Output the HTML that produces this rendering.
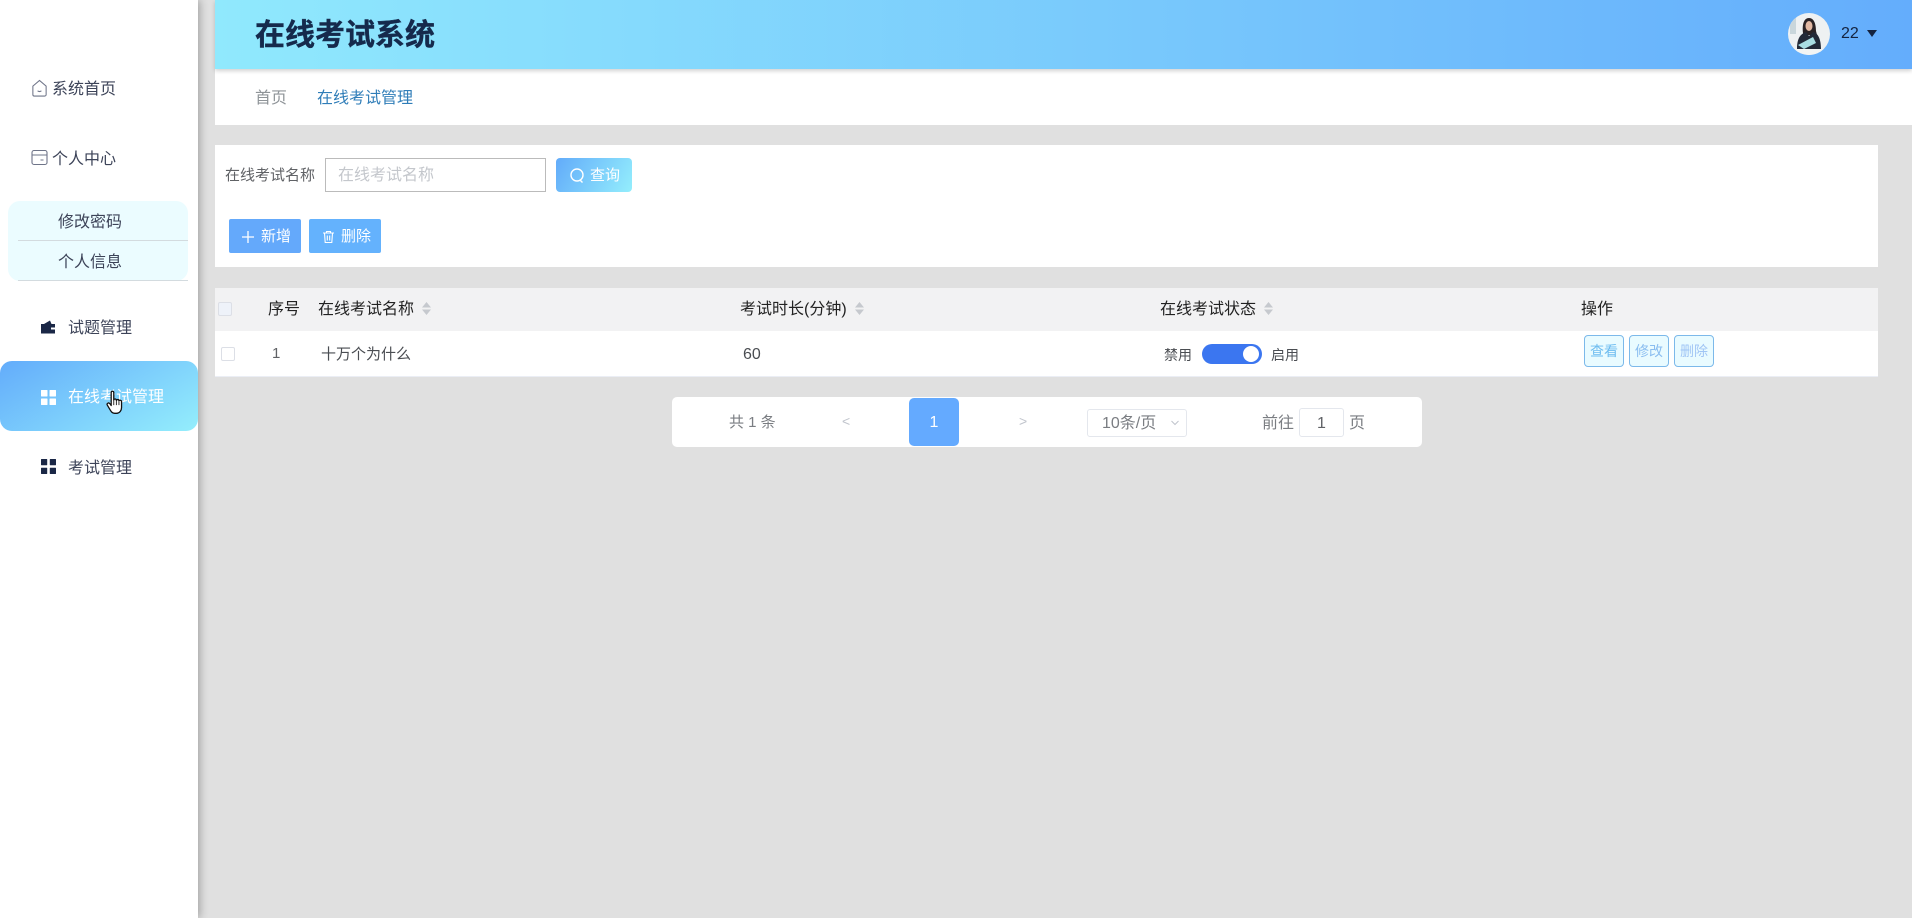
<!DOCTYPE html>
<html lang="zh"><head><meta charset="utf-8"><title>在线考试系统</title>
<style>
*{box-sizing:border-box;margin:0;padding:0}
html,body{width:1912px;height:918px;overflow:hidden;background:#e0e0e0;font-family:"Liberation Sans","Noto Sans CJK SC",sans-serif;font-weight:400}
.a{position:absolute;white-space:nowrap}
.t{position:absolute;white-space:nowrap;line-height:24px;height:24px}
.sb{left:0;top:0;width:198px;height:918px;background:#fff;box-shadow:2px 0 8px rgba(0,0,0,.28)}
.hd{left:215px;top:0;width:1697px;height:69px;background:linear-gradient(90deg,#90e9fd 0%,#64adfc 100%);box-shadow:0 2px 4px rgba(0,0,0,.18)}
.btn{position:absolute;top:219px;height:34px;border-radius:2px;color:#fff;font-size:15px;line-height:33px}
.op{position:absolute;top:335px;width:40px;height:32px;background:#e9fbff;border:1px solid #7cb9ea;border-radius:4px;font-size:14px;line-height:30px;text-align:center}
.sort{position:absolute;width:11px;height:15px}
.chk{position:absolute;width:14px;height:14px;border:1px solid #dcdfe6;border-radius:2px}
</style></head><body>

<div class="a sb"></div>
<div class="a" style="left:215px;top:69px;width:1697px;height:56px;background:#fff"></div>
<div class="a hd"></div>
<div class="t" style="left:255px;top:15px;font-size:30px;font-weight:700;color:#152a4c;line-height:42px;height:42px;-webkit-text-stroke:.4px #152a4c">在线考试系统</div>
<svg class="a" style="left:1788px;top:13px" width="42" height="42" viewBox="0 0 42 42"><defs><clipPath id="c"><circle cx="21" cy="21" r="21"/></clipPath></defs><g clip-path="url(#c)"><rect width="42" height="42" fill="#eef1f2"/><rect x="2" y="5" width="6" height="16" fill="#c9d6db"/><path d="M15 20c-1-9 1-15 6-15s7 6 7 13l1 4H15z" fill="#2a2326"/><ellipse cx="21" cy="13" rx="3.500" ry="5" fill="#e2b9a4"/><path d="M9 36c0-10 3-15 9-17l3 4 4-4c5 1 8 7 8 17z" fill="#232a38"/><path d="M10 32l15-8 3 6-12 6z" fill="#a9dde2"/><rect x="6" y="36" width="30" height="6" fill="#f3f5f4"/></g></svg>
<div class="t" style="left:1841px;top:22px;font-size:16px;color:#14233f">22</div>
<div class="a" style="left:1867px;top:30px;width:0;height:0;border-left:5px solid transparent;border-right:5px solid transparent;border-top:7px solid #14233f"></div>

<div class="t" style="left:255px;top:87px;font-size:16px;color:#8f9498">首页</div>
<div class="t" style="left:317px;top:87px;font-size:16px;color:#2f7db8">在线考试管理</div>

<!-- sidebar -->
<svg class="a" style="left:31px;top:79px" width="17" height="18" viewBox="0 0 17 19" fill="none" stroke="#6e7488" stroke-width="1.100"><path d="M1.500 7.500L8.500 1.500l7 6v9a1.500 1.500 0 0 1-1.500 1.500H3a1.500 1.500 0 0 1-1.500-1.500z"/><path d="M6.500 12.500q2 1.500 4 0"/></svg>
<div class="t" style="left:52px;top:78px;font-size:16px;color:#3c4358">系统首页</div>
<svg class="a" style="left:31px;top:149px" width="17" height="17" viewBox="0 0 17 17" fill="none" stroke="#6e7488" stroke-width="1.100"><rect x="1" y="1.500" width="15" height="14" rx="2"/><path d="M1 6h15M9.500 11h3"/></svg>
<div class="t" style="left:52px;top:148px;font-size:16px;color:#3c4358">个人中心</div>

<div class="a" style="left:8px;top:201px;width:180px;height:80px;background:#ebfcff;border-radius:12px"></div>
<div class="a" style="left:18px;top:240px;width:170px;height:1px;background:#d3dbdf"></div>
<div class="a" style="left:18px;top:280px;width:170px;height:1px;background:#d3dbdf"></div>
<div class="t" style="left:58px;top:211px;font-size:16px;color:#3c4358">修改密码</div>
<div class="t" style="left:58px;top:251px;font-size:16px;color:#3c4358">个人信息</div>

<svg class="a" style="left:41px;top:320px" width="14" height="14" viewBox="0 0 14 14"><path d="M0 4h14v9.500H0z" fill="#1a2746"/><path d="M3 4l6-3.500 1.500 3.500z" fill="#1a2746"/><rect x="10" y="7.500" width="4" height="2" fill="#fff"/></svg>
<div class="t" style="left:68px;top:317px;font-size:16px;color:#3c4358">试题管理</div>

<div class="a" style="left:0;top:361px;width:198px;height:70px;border-radius:12px;background:linear-gradient(150deg,#63acfb 0%,#94eefc 100%)"></div>
<svg class="a" style="left:41px;top:390px" width="15" height="15" viewBox="0 0 15 15" fill="#fff"><rect width="6.500" height="6.500" rx=".5"/><rect x="8.500" width="6.500" height="6.500" rx=".5"/><rect y="8.500" width="6.500" height="6.500" rx=".5"/><rect x="8.500" y="8.500" width="6.500" height="6.500" rx=".5"/></svg>
<div class="t" style="left:68px;top:386px;font-size:16px;color:#fff">在线考试管理</div>

<svg class="a" style="left:41px;top:459px" width="15" height="15" viewBox="0 0 15 15" fill="#1a2746"><rect width="6.200" height="6.200" rx=".5"/><rect x="8.800" width="6.200" height="6.200" rx=".5"/><rect y="8.800" width="6.200" height="6.200" rx=".5"/><rect x="8.800" y="8.800" width="6.200" height="6.200" rx=".5"/></svg>
<div class="t" style="left:68px;top:457px;font-size:16px;color:#3c4358">考试管理</div>

<!-- search card -->
<div class="a" style="left:215px;top:145px;width:1663px;height:122px;background:#fff"></div>
<div class="t" style="left:225px;top:164px;font-size:15px;color:#606266">在线考试名称</div>
<div class="a" style="left:325px;top:158px;width:221px;height:34px;border:1px solid #bbb;background:#fff"></div>
<div class="t" style="left:338px;top:164px;font-size:16px;color:#c4c7cc">在线考试名称</div>
<div class="a" style="left:556px;top:158px;width:76px;height:34px;border-radius:4px;background:linear-gradient(120deg,#62abfa,#94eefc)"></div>
<svg class="a" style="left:569px;top:167px" width="16" height="17" viewBox="0 0 16 17" fill="none" stroke="#fff" stroke-width="1.400"><circle cx="8" cy="8" r="6"/><path d="M11 13l2.500 2.500"/></svg>
<div class="t" style="left:590px;top:164px;font-size:15px;color:#fff">查询</div>

<div class="btn" style="left:229px;width:72px;background:#64a9fb"></div>
<svg class="a" style="left:241px;top:230px" width="14" height="14" viewBox="0 0 14 14" stroke="#fff" stroke-width="1.300"><path d="M7 1v12M1 7h12"/></svg>
<div class="t" style="left:261px;top:225px;font-size:15px;color:#fff">新增</div>
<div class="btn" style="left:309px;width:72px;background:#64b2fd"></div>
<svg class="a" style="left:322px;top:230px" width="13" height="14" viewBox="0 0 13 14" fill="none" stroke="#fff" stroke-width="1.100"><path d="M1 3h11M4.500 3V1.500h4V3M2.500 3l.7 9.500h6.600l.7-9.500M5.300 5.500v5M7.700 5.500v5"/></svg>
<div class="t" style="left:341px;top:225px;font-size:15px;color:#fff">删除</div>

<!-- table -->
<div class="a" style="left:215px;top:288px;width:1663px;height:43px;background:#f2f2f3"></div>
<div class="a" style="left:215px;top:331px;width:1663px;height:46px;background:#fff;border-bottom:1px solid #ebeef5"></div>
<div class="chk" style="left:218px;top:302px;background:#eef2f9"></div>
<div class="t" style="left:268px;top:298px;font-size:16px;color:#222">序号</div>
<div class="t" style="left:318px;top:298px;font-size:16px;color:#222">在线考试名称</div>
<svg class="sort" style="left:421px;top:301px" viewBox="0 0 11 15" fill="#c6c9ce"><path d="M5.500 1l4.500 5.500H1zM5.500 14l4.500-5.500H1z"/></svg>
<div class="t" style="left:740px;top:298px;font-size:16px;color:#222">考试时长(分钟)</div>
<svg class="sort" style="left:854px;top:301px" viewBox="0 0 11 15" fill="#c6c9ce"><path d="M5.500 1l4.500 5.500H1zM5.500 14l4.500-5.500H1z"/></svg>
<div class="t" style="left:1160px;top:298px;font-size:16px;color:#222">在线考试状态</div>
<svg class="sort" style="left:1263px;top:301px" viewBox="0 0 11 15" fill="#c6c9ce"><path d="M5.500 1l4.500 5.500H1zM5.500 14l4.500-5.500H1z"/></svg>
<div class="t" style="left:1581px;top:298px;font-size:16px;color:#222">操作</div>

<div class="chk" style="left:221px;top:347px;background:#fff"></div>
<div class="t" style="left:272px;top:342px;font-size:15px;color:#606266">1</div>
<div class="t" style="left:321px;top:343px;font-size:15px;color:#4a4d52">十万个为什么</div>
<div class="t" style="left:743px;top:343px;font-size:16px;color:#4a4d52">60</div>
<div class="t" style="left:1164px;top:343px;font-size:14px;color:#4a4d52">禁用</div>
<div class="a" style="left:1202px;top:344px;width:60px;height:20px;border-radius:10px;background:#3b76f0"></div>
<div class="a" style="left:1243px;top:346px;width:16px;height:16px;border-radius:50%;background:#fff"></div>
<div class="t" style="left:1271px;top:343px;font-size:14px;color:#4a4d52">启用</div>
<div class="op" style="left:1584px;color:#6dbcf0">查看</div>
<div class="op" style="left:1629px;color:#8abdf0">修改</div>
<div class="op" style="left:1674px;color:#a0c5f5">删除</div>

<!-- pagination -->
<div class="a" style="left:672px;top:397px;width:750px;height:50px;background:#fff;border-radius:5px"></div>
<div class="t" style="left:729px;top:411px;font-size:15px;color:#7a7d82;word-spacing:0">共 1 条</div>
<div class="t" style="left:842px;top:409px;font-size:14px;color:#c0c4cc">&lt;</div>
<div class="a" style="left:909px;top:398px;width:50px;height:48px;border-radius:5px;background:#64aaff;color:#fff;font-size:16px;line-height:50px;text-align:center">1</div>
<div class="t" style="left:1019px;top:409px;font-size:14px;color:#c0c4cc">&gt;</div>
<div class="a" style="left:1087px;top:409px;width:100px;height:28px;border:1px solid #e4e7ed;border-radius:3px"></div>
<div class="t" style="left:1102px;top:412px;font-size:16px;color:#7a7d82">10条/页</div>
<svg class="a" style="left:1170px;top:419px" width="10" height="8" viewBox="0 0 10 8" fill="none" stroke="#c0c4cc"><path d="M1.500 2l3.500 3.500L8.500 2"/></svg>
<div class="t" style="left:1262px;top:412px;font-size:16px;color:#7a7d82">前往</div>
<div class="a" style="left:1299px;top:408px;width:45px;height:29px;border:1px solid #e4e7ed;border-radius:3px;text-align:center;font-size:16px;line-height:29px;color:#606266">1</div>
<div class="t" style="left:1349px;top:412px;font-size:16px;color:#7a7d82">页</div>

<!-- cursor -->
<svg class="a" style="left:106px;top:390px" width="19" height="25" viewBox="0 0 22 28"><path d="M6 2.500c0-2 3-2 3 0V11c.5-1.500 3-1.500 3 .5 .5-1.300 3-1.300 3 .5 .5-1 3-.8 3 1V20c0 3-2 6.500-6 6.500H10c-3 0-4-2-5.500-4.500L1.500 17c-1-2 1.500-3.500 3-1.500L6 17.500z" fill="#fff" stroke="#111" stroke-width="1.500" stroke-linejoin="round"/><path d="M9 11v6M12 11.500V17M15 12.500V17" stroke="#111" stroke-width="1" fill="none"/></svg>
</body></html>
